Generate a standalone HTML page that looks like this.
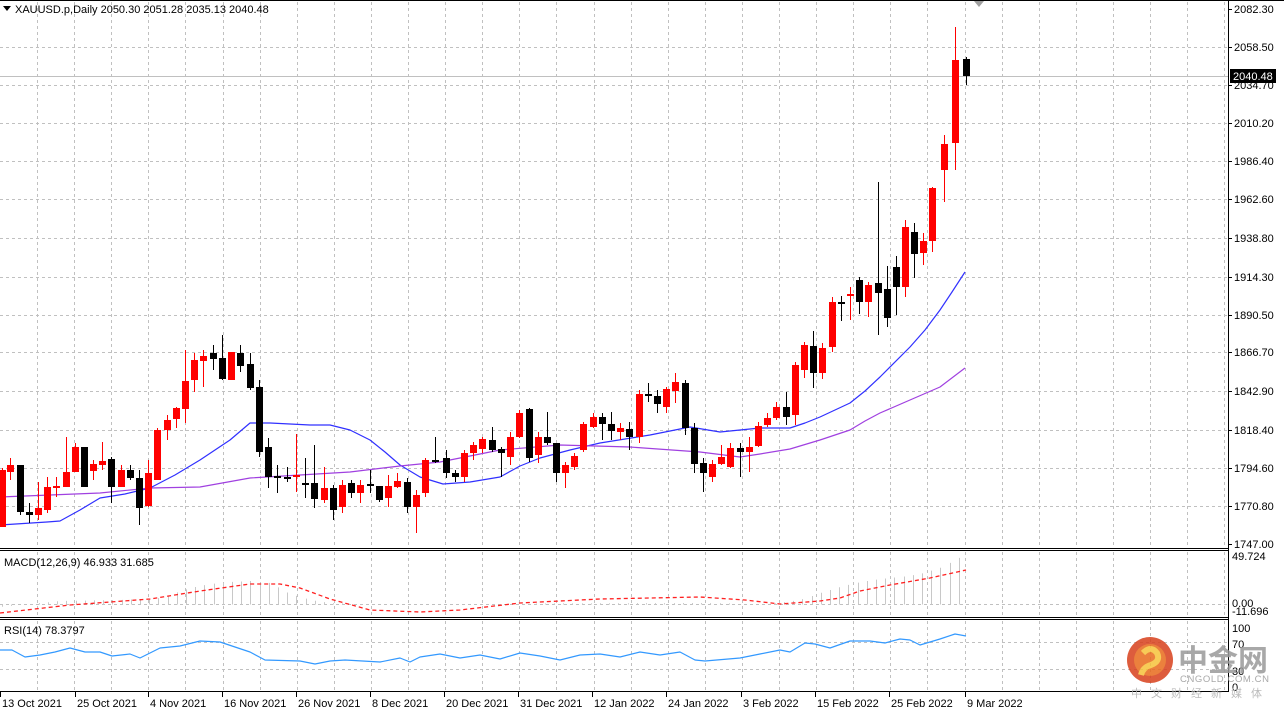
<!DOCTYPE html>
<html><head><meta charset="utf-8"><style>
html,body{margin:0;padding:0;background:#fff;width:1284px;height:711px;overflow:hidden}
svg{display:block}
text{font-family:"Liberation Sans",Tahoma,sans-serif;font-size:11px;fill:#000}
</style></head><body>
<svg id="s" width="1284" height="711" xmlns="http://www.w3.org/2000/svg">
<rect width="1284" height="711" fill="#fff"/>
<g id="grid" stroke="#c0c0c0" stroke-dasharray="3,3" stroke-width="1"></g>
<line x1="0" y1="76.5" x2="1228" y2="76.5" stroke="#c0c0c0"/>
<g id="ma"></g>
<g id="c"></g>
<g id="ind"></g>
<g stroke="#000" stroke-width="1">
<line x1="0" y1="0.5" x2="1284" y2="0.5"/>
<line x1="1228.5" y1="0" x2="1228.5" y2="692"/>
<line x1="0" y1="548.5" x2="1229" y2="548.5"/><line x1="0" y1="550.5" x2="1229" y2="550.5"/>
<line x1="0" y1="617.5" x2="1229" y2="617.5"/><line x1="0" y1="619.5" x2="1229" y2="619.5"/>
<line x1="0" y1="691.5" x2="1229" y2="691.5"/>
</g>
<g id="ax"></g>
<polygon points="974,1 984,1 979,7" fill="#a0a0a0"/>
<polygon points="3,6 11,6 7,11" fill="#000"/>
<text x="15" y="13">XAUUSD.p,Daily  2050.30 2051.28 2035.13 2040.48</text>
<text x="4" y="566">MACD(12,26,9) 46.933 31.685</text>
<text x="4" y="634">RSI(14) 78.3797</text>
<rect x="1230" y="69" width="46" height="14" fill="#000"/>
<text x="1233" y="80" style="fill:#fff">2040.48</text>
<g opacity="0.85">
<circle cx="1150" cy="660" r="23" fill="#d8401c"/>
<circle cx="1150" cy="660" r="16" fill="#e86a1c"/>
<path d="M1143 653 q8 -8 14 0 q4 8 -6 12 q-8 2 -10 10" stroke="#f6c23a" stroke-width="6" fill="none"/>
<text x="1178" y="671" style="font-family:'Noto Sans CJK SC',sans-serif;font-size:30px;fill:#9a9a9a;font-weight:bold">中金网</text>
<text x="1180" y="682" style="font-size:9.5px;fill:#9a9a9a;letter-spacing:0.6px">CNGOLD.COM.CN</text>
<text x="1131" y="697" style="font-family:'Noto Sans CJK SC',sans-serif;font-size:11px;fill:#b0b0b0;letter-spacing:9px">中文财经新媒体</text>
</g>
</svg>
<script>
var NS="http://www.w3.org/2000/svg",s=document.getElementById('s');
function el(p,t,a,txt){var e=document.createElementNS(NS,t);for(var k in a)e.setAttribute(k,a[k]);if(txt!=null)e.textContent=txt;document.getElementById(p).appendChild(e);return e;}
for(var k=0;k<=32;k++){var x=Math.round(37+k*37.1)+0.5;if(x>1227)break;
 el('grid','line',{x1:x,y1:2,x2:x,y2:547});el('grid','line',{x1:x,y1:552,x2:x,y2:616});el('grid','line',{x1:x,y1:621,x2:x,y2:690});}
var py=[9,47,85,123,161,199,238,277,315,352,391,430,468,506,544];
var pl=["2082.30","2058.50","2034.70","2010.20","1986.40","1962.60","1938.80","1914.30","1890.50","1866.70","1842.90","1818.40","1794.60","1770.80","1747.00"];
for(var i=0;i<py.length;i++){if(i>0&&i<14)el('grid','line',{x1:0,y1:py[i]+0.5,x2:1227,y2:py[i]+0.5});
 el('ax','line',{x1:1228,y1:py[i]+0.5,x2:1232,y2:py[i]+0.5,stroke:'#000'});el('ax','text',{x:1234,y:py[i]+4},pl[i]);}
[604.5,642.5,669.5].forEach(function(y){el('grid','line',{x1:0,y1:y,x2:1227,y2:y});});
[[557,"49.724"],[604,"0.00"],[612,"-11.696"],[629,"100"],[645,"70"],[672,"30"],[688,"0"]].forEach(function(a){el('ax','text',{x:1232,y:a[0]+3},a[1]);});
var dl=[[0,"13 Oct 2021"],[75,"25 Oct 2021"],[148,"4 Nov 2021"],[222,"16 Nov 2021"],[296,"26 Nov 2021"],[370,"8 Dec 2021"],[444,"20 Dec 2021"],[518,"31 Dec 2021"],[592,"12 Jan 2022"],[666,"24 Jan 2022"],[741,"3 Feb 2022"],[815,"15 Feb 2022"],[889,"25 Feb 2022"],[965,"9 Mar 2022"]];
dl.forEach(function(d){el('ax','line',{x1:d[0]+0.5,y1:692,x2:d[0]+0.5,y2:697,stroke:'#000'});el('ax','text',{x:d[0]+2,y:707},d[1]);});
var C=[[2,468,527,470,527,1],[10,458,480,465,472,1],[20,465,515,465,512,0],[29,503,523,512,515,0],[38,482,520,508,515,1],[47,477,513,487,510,1],[56,477,497,486,488,1],[66,437,487,472,487,1],[75,443,472,447,472,1],[84,447,487,447,487,0],[93,460,480,464,471,1],[102,442,470,461,465,1],[111,457,503,459,487,0],[121,465,487,470,487,1],[130,465,480,470,478,0],[139,470,525,478,508,0],[148,460,507,473,506,1],[157,428,480,430,480,1],[167,415,440,420,430,1],[176,407,428,408,419,1],[185,350,423,381,409,1],[194,353,392,360,380,1],[203,350,387,356,361,1],[213,345,370,353,359,0],[222,335,380,358,379,0],[231,352,380,352,380,1],[240,345,372,353,366,0],[250,353,390,364,388,0],[259,380,457,387,452,0],[268,438,488,447,477,0],[277,465,493,476,478,0],[287,467,482,477,479,0],[296,434,492,475,477,1],[305,458,498,483,485,0],[314,445,508,483,499,0],[324,467,503,488,500,1],[333,485,520,488,510,0],[342,480,513,485,507,1],[351,480,498,483,493,0],[360,480,503,485,493,1],[370,470,493,484,486,0],[379,486,502,486,500,0],[388,475,507,486,498,1],[397,473,488,481,487,1],[407,478,513,482,507,0],[416,490,533,495,507,1],[425,458,497,460,493,1],[435,437,463,460,462,0],[446,450,478,458,473,0],[455,470,482,473,477,0],[464,450,482,453,477,1],[473,442,460,445,453,1],[482,437,453,439,449,1],[492,427,452,440,450,0],[501,447,477,449,453,0],[510,432,465,437,457,1],[519,410,438,413,437,1],[529,408,462,409,458,0],[538,432,463,437,455,1],[547,412,445,437,443,0],[556,443,482,443,473,0],[565,462,488,465,473,1],[574,453,470,456,467,1],[583,422,452,424,450,1],[593,413,428,417,427,1],[602,413,440,417,424,0],[611,412,440,424,431,0],[620,423,440,428,432,1],[629,422,450,429,437,0],[639,390,443,394,437,1],[648,383,402,394,396,0],[657,390,413,396,404,0],[666,387,413,389,407,1],[675,373,403,382,391,1],[685,380,435,383,428,0],[694,423,473,428,464,0],[703,458,492,463,473,0],[712,460,482,464,477,1],[721,445,465,457,464,1],[730,443,468,448,467,1],[740,443,477,448,452,0],[749,437,472,447,452,1],[758,422,447,426,446,1],[767,413,427,418,425,1],[776,402,420,407,418,1],[786,392,425,407,417,0],[795,362,425,365,415,1],[804,342,378,345,370,1],[813,331,388,346,373,0],[822,343,379,348,373,1],[832,297,352,302,347,1],[841,296,321,302,304,0],[850,287,320,294,296,1],[859,277,314,280,302,0],[868,282,317,285,302,1],[878,182,335,283,293,0],[887,266,327,289,318,0],[896,256,315,267,287,0],[905,220,297,227,287,1],[914,223,278,232,254,0],[923,233,265,241,253,1],[932,187,252,188,241,1],[944,135,202,144,170,1],[955,27,170,60,143,1],[966,57,85,59,76,0]];
C.forEach(function(c){var x=c[0],col=c[5]?'#ff0000':'#000';
 el('c','line',{x1:x+0.5,y1:c[1],x2:x+0.5,y2:c[2],stroke:col});
 el('c','rect',{x:x-3,y:c[3],width:7,height:Math.max(1,c[4]-c[3]),fill:col});});
function pl2(p,pts,st,w,da){var d='M'+pts.map(function(q){return q[0]+' '+q[1]}).join(' L');var a={d:d,fill:'none',stroke:st,'stroke-width':w,'stroke-linejoin':'round'};if(da)a['stroke-dasharray']=da;el(p,'path',a);}
pl2('ma',[[0,525],[47,522],[60,521],[80,510],[100,498],[125,494],[150,488],[175,475],[200,460],[230,440],[250,423],[270,423],[310,425],[330,425],[350,430],[370,440],[385,452],[400,465],[420,477],[443,484],[470,482],[500,477],[520,466],[540,458],[570,450],[600,443],[650,435],[690,427],[720,432],[760,428],[790,428],[805,423],[820,417],[850,403],[865,391],[880,377],[910,347],[925,330],[940,310],[952,292],[965,272]],'#3030ff',1.2);
pl2('ma',[[0,497],[50,495],[100,493],[150,488],[200,487],[250,478],[300,475],[350,472],[400,466],[440,462],[470,456],[500,450],[560,445],[630,447],[700,452],[740,457],[760,454],[790,449],[820,440],[850,430],[865,421],[880,413],[910,400],[940,387],[965,368]],'#a040e0',1.2);
var H=[[0,607],[60,601],[120,600],[160,598],[190,588],[210,584],[230,582],[250,581],[270,583],[290,594],[310,600],[330,603],[360,604],[700,603],[770,604],[800,600],[820,593],[840,587],[860,582],[880,579],[900,577],[920,574],[940,568],[955,560],[966,554]];
function interp(A,x){for(var i=1;i<A.length;i++)if(x<=A[i][0]){var a=A[i-1],b=A[i];return a[1]+(b[1]-a[1])*(x-a[0])/(b[0]-a[0]);}return A[A.length-1][1];}
for(var x=2;x<=966;x+=9.2){var y=interp(H,x);if(Math.abs(y-604.5)>1)el('ind','line',{x1:Math.round(x)+0.5,y1:604.5,x2:Math.round(x)+0.5,y2:y,stroke:'#c8c8c8'});}
pl2('ind',[[0,613],[70,605],[150,599],[200,591],[250,584],[280,584],[300,588],[330,599],[370,610],[420,612],[460,610],[520,603],[600,599],[700,597],[745,600],[780,604],[820,601],[840,598],[860,591],[890,585],[930,578],[966,570]],'#ff2020',1.3,'4,3');
pl2('ind',[[0,650],[12,650],[25,657],[40,655],[55,652],[70,648],[85,652],[100,652],[112,656],[130,654],[140,658],[160,648],[180,646],[200,641],[220,642],[235,647],[250,652],[265,660],[300,661],[315,664],[330,661],[345,660],[380,662],[400,658],[410,662],[420,657],[440,654],[460,658],[480,655],[500,659],[520,653],[540,656],[560,660],[580,655],[600,654],[620,657],[640,652],[660,655],[680,652],[695,660],[705,661],[740,658],[760,654],[780,650],[790,652],[805,643],[815,644],[830,648],[850,641],[870,641],[885,643],[900,639],[910,640],[920,645],[940,639],[955,634],[966,636]],'#3399ff',1.2);
</script>
</body></html>
